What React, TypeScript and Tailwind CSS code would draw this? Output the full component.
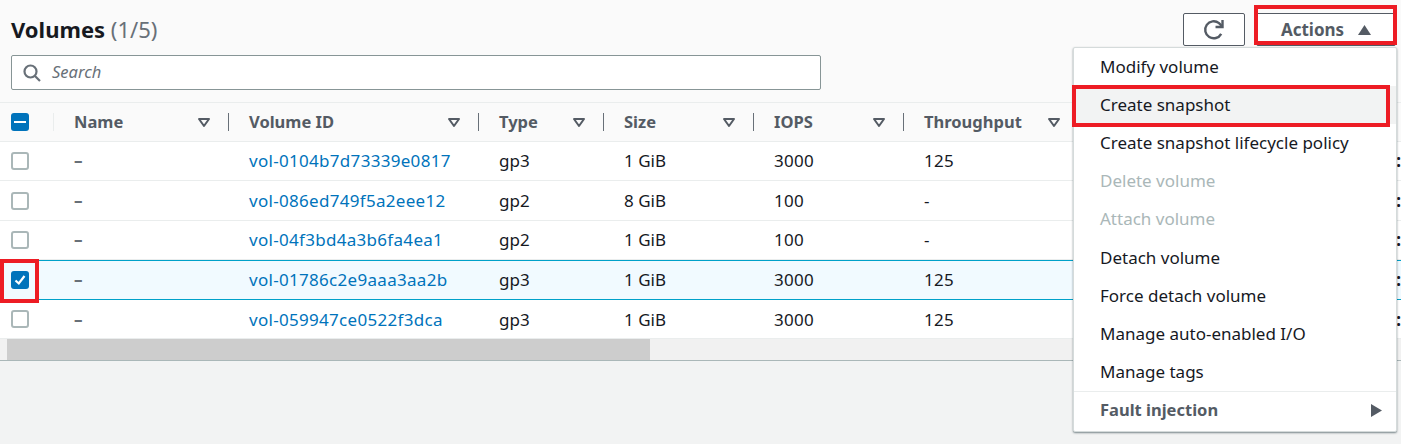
const columns = [
  { label: "Name", width: "w-[175px]" },
  { label: "Volume ID", width: "w-[250px]" },
  { label: "Type", width: "w-[125px]" },
  { label: "Size", width: "w-[150px]" },
  { label: "IOPS", width: "w-[150px]" },
  { label: "Throughput", width: "w-[170px]" },
];

const volumes = [
  { id: "vol-0104b7d73339e0817", type: "gp3", size: "1 GiB", iops: "3000", throughput: "125" },
  { id: "vol-086ed749f5a2eee12", type: "gp2", size: "8 GiB", iops: "100", throughput: "-" },
  { id: "vol-04f3bd4a3b6fa4ea1", type: "gp2", size: "1 GiB", iops: "100", throughput: "-" },
  { id: "vol-01786c2e9aaa3aa2b", type: "gp3", size: "1 GiB", iops: "3000", throughput: "125", selected: true },
  { id: "vol-059947ce0522f3dca", type: "gp3", size: "1 GiB", iops: "3000", throughput: "125" },
];

const menuItems = [
  { label: "Modify volume" },
  { label: "Create snapshot", active: true },
  { label: "Create snapshot lifecycle policy" },
  { label: "Delete volume", disabled: true },
  { label: "Attach volume", disabled: true },
  { label: "Detach volume" },
  { label: "Force detach volume" },
  { label: "Manage auto-enabled I/O" },
  { label: "Manage tags" },
];

function FilterIcon() {
  return (
    <svg width="14" height="11" viewBox="0 0 14 11" className="shrink-0">
      <path d="M2 2 H12 L7 9 Z" fill="none" stroke="#545b64" strokeWidth="2" strokeLinejoin="round" />
    </svg>
  );
}

function Checkbox({ checked }: { checked?: boolean }) {
  if (checked) {
    return (
      <div className="w-[18px] h-[18px] rounded-[3px] bg-[#0073bb] flex items-center justify-center">
        <svg width="14" height="14" viewBox="0 0 14 14">
          <path d="M2.5 7.5 L5.8 10.5 L11.5 3" fill="none" stroke="#fff" strokeWidth="2.2" />
        </svg>
      </div>
    );
  }
  return <div className="w-[18px] h-[18px] rounded-[3px] bg-white border-2 border-[#aab7b8]" />;
}

export default function App() {
  return (
    <div
      className="relative w-[1401px] h-[444px] overflow-hidden bg-[#f2f3f3] text-[#16191f] text-[17px]"
      style={{ fontFamily: '"Noto Sans", "Open Sans", sans-serif' }}
    >
      <div className="bg-[#fafafa] h-[102px] pl-[11px] pr-[5px] pt-[13px]">
        <div className="flex justify-between h-[33px]">
          <h1 className="text-[22px] leading-[33px] font-bold">
            Volumes <span className="font-normal text-[#687078]">(1/5)</span>
          </h1>
          <div className="flex gap-[11px]">
            <button className="w-[62px] h-[33px] bg-white border border-[#545b64] rounded-[2px] flex items-center justify-center">
              <svg width="24" height="24" viewBox="0 0 22 22" fill="none" stroke="#545b64" strokeWidth="2.2">
                <path d="M17.6 14.5 A7.8 7.8 0 1 1 15.6 4.7 L18.5 7.6" />
                <path d="M18.8 1.8 V8.2 H12.4" />
              </svg>
            </button>
            <button className="w-[140px] h-[33px] bg-white border border-[#545b64] rounded-[2px] flex items-center justify-center gap-[14px] text-[17px] font-bold text-[#545b64]">
              Actions
              <svg width="13" height="10" viewBox="0 0 13 10">
                <path d="M6.5 0 L13 10 H0 Z" fill="#545b64" />
              </svg>
            </button>
          </div>
        </div>
        <div className="mt-[9px] w-[810px] h-[35px] bg-white border border-[#879596] rounded-[2px] flex items-center pl-[10px] gap-[10px]">
          <svg width="20" height="20" viewBox="0 0 20 20" fill="none" stroke="#687078" strokeWidth="2.2">
            <circle cx="8.5" cy="8.5" r="6" />
            <path d="M13 13 L18 18" />
          </svg>
          <span className="italic text-[#687078] text-[16.5px]">Search</span>
        </div>
      </div>

      <div className="bg-[#fafafa] h-[40px] flex items-center border-t border-b border-[#eaeded] font-bold text-[#545b64] text-[16.5px]">
        <div className="w-[53px] h-full pl-[11px] flex items-center shrink-0">
          <div className="w-[18px] h-[18px] rounded-[3px] bg-[#0073bb] flex items-center justify-center">
            <div className="w-[12px] h-[2px] bg-white" />
          </div>
        </div>
        {columns.map((col, i) => (
          <div key={col.label} className={`${col.width} shrink-0 flex items-center pl-[20px] h-[18px] ${i === 0 ? "border-l border-[#eaeded]" : "border-l border-[#687078]"}`}>
            <span className="flex-1">{col.label}</span>
            <span className={i === 5 ? "mr-[12px]" : "mr-[17px]"}>
              <FilterIcon />
            </span>
          </div>
        ))}
      </div>

      {volumes.map((v, i) => (
        <div
          key={v.id}
          className={`h-[39.4px] flex items-center ${i === 4 ? "pt-px" : ""} ${v.selected ? "bg-[#f1faff] border-y border-[#00a1c9]" : "bg-white border-b border-[#eaeded]"}`}
        >
          <div className="w-[53px] pl-[11px] shrink-0">
            <Checkbox checked={v.selected} />
          </div>
          <div className="w-[175px] pl-[21px] shrink-0 text-[#687078] font-bold">–</div>
          <div className="w-[250px] pl-[21px] shrink-0 text-[#0073bb] tracking-[0.3px]">{v.id}</div>
          <div className="w-[125px] pl-[21px] shrink-0">{v.type}</div>
          <div className="w-[150px] pl-[21px] shrink-0">{v.size}</div>
          <div className="w-[150px] pl-[21px] shrink-0 tracking-[0.3px]">{v.iops}</div>
          <div className="w-[170px] pl-[21px] shrink-0 tracking-[0.3px]">{v.throughput}</div>
          <div className="ml-auto font-bold">:</div>
        </div>
      ))}

      <div className="h-[22px] bg-[#f1f1f1] border-b border-[#aab7b8] pl-[7px]">
        <div className="w-[643px] h-full bg-[#cdcdcd]" />
      </div>

      {/* Actions dropdown */}
      <div className="absolute left-[1073px] top-[47px] w-[324px] h-[385px] bg-white border border-[#d5dbdb] rounded-[2px] shadow-[0_1px_2px_rgba(0,28,36,0.5)]">
        {menuItems.map((item) => (
          <div
            key={item.label}
            className={`h-[38.2px] pl-[26px] pb-[1.5px] flex items-center ${item.active ? "bg-[#f2f3f3]" : ""} ${item.disabled ? "text-[#aab7b8]" : ""}`}
          >
            {item.label}
          </div>
        ))}
        <div className="-mt-px border-t border-[#eaeded] h-[39px] pl-[26px] pr-[14px] flex items-center justify-between font-bold text-[#545b64] text-[16.5px]">
          Fault injection
          <svg width="11" height="13" viewBox="0 0 11 13">
            <path d="M0 0 L11 6.5 L0 13 Z" fill="#545b64" />
          </svg>
        </div>
      </div>

      {/* red highlights drawn on the screenshot */}
      <div className="absolute left-[1254px] top-[5px] w-[143px] h-[40px] border-[4px] border-[#ed1c24]" />
      <div className="absolute left-[1072px] top-[85px] w-[318px] h-[42px] border-[4px] border-[#ed1c24]" />
      <div className="absolute left-0 top-[259px] w-[39px] h-[44px] border-[4px] border-[#ed1c24]" />
    </div>
  );
}
